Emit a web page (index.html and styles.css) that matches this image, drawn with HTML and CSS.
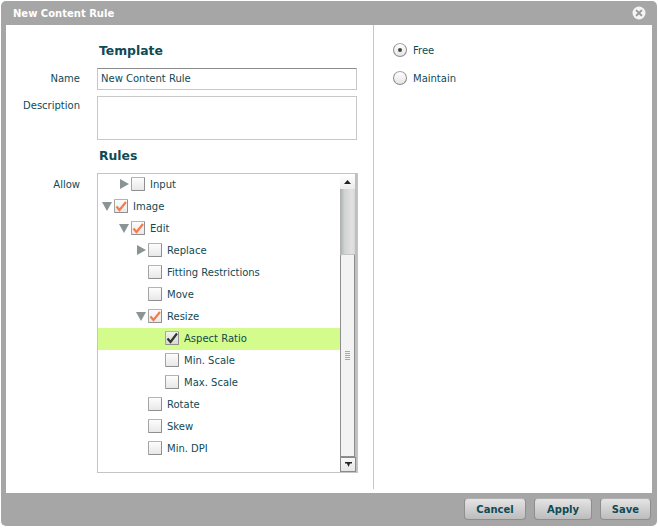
FILE: index.html
```html
<!DOCTYPE html>
<html lang="en">
<head>
<meta charset="utf-8">
<title>New Content Rule</title>
<link rel="stylesheet" href="styles.css">
</head>
<body>
<div class="window">
  <header class="titlebar">
    <span class="title">New Content Rule</span>
    <svg class="close" width="14" height="14" viewBox="0 0 14 14"><circle cx="7" cy="7" r="6.5" fill="#f4f4f4"/><path d="M4.6 4.6l4.8 4.8M9.4 4.6l-4.8 4.8" stroke="#9a9a9a" stroke-width="2" stroke-linecap="round"/></svg>
  </header>
  <main class="content">
    <section class="left">
      <div class="form">
        <h2 class="heading field">Template</h2>
        <label class="label label-name">Name</label>
        <div class="input input-name">New Content Rule</div>
        <label class="label label-desc">Description</label>
        <div class="input input-desc"></div>
        <h2 class="heading heading-rules field">Rules</h2>
        <label class="label label-allow">Allow</label>
        <div class="tree">
          <ul class="rows">
            <li class="row d1"><span class="slot"><svg width="9" height="10" viewBox="0 0 9 10"><path d="M0 0l9 5-9 5z" fill="#8a9494"/></svg></span><span class="box"></span><span class="text">Input</span></li>
            <li class="row d0"><span class="slot"><svg width="10" height="9" viewBox="0 0 10 9"><path d="M0 0h10L5 9z" fill="#8a9494"/></svg></span><span class="box"><svg class="tick" width="14" height="14" viewBox="0 0 14 14"><path d="M2.5 7.5L5.5 11 12 3" fill="none" stroke="#f57a4e" stroke-width="2.2"/></svg></span><span class="text">Image</span></li>
            <li class="row d1"><span class="slot"><svg width="10" height="9" viewBox="0 0 10 9"><path d="M0 0h10L5 9z" fill="#8a9494"/></svg></span><span class="box"><svg class="tick" width="14" height="14" viewBox="0 0 14 14"><path d="M2.5 7.5L5.5 11 12 3" fill="none" stroke="#f57a4e" stroke-width="2.2"/></svg></span><span class="text">Edit</span></li>
            <li class="row d2"><span class="slot"><svg width="9" height="10" viewBox="0 0 9 10"><path d="M0 0l9 5-9 5z" fill="#8a9494"/></svg></span><span class="box"></span><span class="text">Replace</span></li>
            <li class="row d2"><span class="slot"></span><span class="box"></span><span class="text">Fitting Restrictions</span></li>
            <li class="row d2"><span class="slot"></span><span class="box"></span><span class="text">Move</span></li>
            <li class="row d2"><span class="slot"><svg width="10" height="9" viewBox="0 0 10 9"><path d="M0 0h10L5 9z" fill="#8a9494"/></svg></span><span class="box"><svg class="tick" width="14" height="14" viewBox="0 0 14 14"><path d="M2.5 7.5L5.5 11 12 3" fill="none" stroke="#f57a4e" stroke-width="2.2"/></svg></span><span class="text">Resize</span></li>
            <li class="row d3 selected"><span class="slot"></span><span class="box box-on"><svg class="tick" width="14" height="14" viewBox="0 0 14 14"><path d="M2.5 7.5L5.5 11 12 2.5" fill="none" stroke="#333" stroke-width="2.2"/></svg></span><span class="text">Aspect Ratio</span></li>
            <li class="row d3"><span class="slot"></span><span class="box"></span><span class="text">Min. Scale</span></li>
            <li class="row d3"><span class="slot"></span><span class="box"></span><span class="text">Max. Scale</span></li>
            <li class="row d2"><span class="slot"></span><span class="box"></span><span class="text">Rotate</span></li>
            <li class="row d2"><span class="slot"></span><span class="box"></span><span class="text">Skew</span></li>
            <li class="row d2"><span class="slot"></span><span class="box"></span><span class="text">Min. DPI</span></li>
          </ul>
          <div class="scrollbar">
            <div class="sb-btn"><svg width="7" height="4" viewBox="0 0 7 4"><path d="M3.5 0L7 4H0z" fill="#222"/></svg></div>
            <div class="sb-track"></div>
            <div class="sb-thumb"><span class="grip"></span></div>
            <div class="sb-btn sb-down"><svg width="7" height="5" viewBox="0 0 7 5"><path d="M0 0h7v1.5H5L3.5 5 2 1.5H0z" fill="#222"/></svg></div>
          </div>
        </div>
      </div>
    </section>
    <section class="right">
      <div class="radio-row"><span class="radio radio-on"></span><span class="text">Free</span></div>
      <div class="radio-row"><span class="radio"></span><span class="text">Maintain</span></div>
    </section>
  </main>
  <footer class="footer">
    <button class="btn btn-cancel">Cancel</button>
    <button class="btn btn-apply">Apply</button>
    <button class="btn btn-save">Save</button>
  </footer>
</div>
</body>
</html>
```
FILE: styles.css
```css
* { box-sizing: border-box; }
html, body { margin: 0; height: 100%; background: #fff; }
body {
  padding: 1px;
  font-family: "DejaVu Sans", Verdana, sans-serif;
  font-size: 10px;
  color: #0f4a55;
}
.window {
  width: 656px;
  height: 525px;
  background: #a6a6a6;
  border-radius: 5px;
  display: flex;
  flex-direction: column;
}
.titlebar {
  height: 24px;
  flex: none;
  display: flex;
  align-items: center;
  justify-content: space-between;
  padding: 0 11px 0 12px;
}
.title { color: #fff; font-weight: bold; font-size: 10px; }
.content {
  flex: 1;
  margin: 0 5px;
  background: #fff;
  display: flex;
  padding-bottom: 4px;
}
.left { width: 368px; flex: none; border-right: 1px solid #c6c6c6; }
.right { flex: 1; padding: 11px 0 0 19px; }
.form {
  display: grid;
  grid-template-columns: 74px 261px;
  column-gap: 17px;
  padding-top: 15px;
}
.field { grid-column: 2; }
.heading {
  margin: 0;
  height: 22px;
  line-height: 22px;
  padding-left: 2px;
  font-size: 12.4px;
  font-weight: bold;
  color: #0f4a55;
}
.heading-rules { margin-top: 5px; }
.label { text-align: right; line-height: 22px; }
.label-name { margin-top: 6px; }
.label-desc { margin-top: 5px; }
.label-allow { margin-top: 7px; }
.input {
  border: 1px solid #c8c8c8;
  background: #fff;
  padding: 0 3px;
  line-height: 19px;
  width: 260px;
}
.input-name { height: 22px; margin-top: 6px; border-top-color: #8c8c8c; }
.input-desc { height: 44px; margin-top: 6px; }
.tree {
  position: relative;
  height: 300px;
  margin-top: 6px;
  border: 1px solid #c4c4c4;
  overflow: hidden;
  display: flex;
}
.rows { flex: 1; list-style: none; margin: 0; padding: 0; }
.row { height: 22px; padding-bottom: 2px; display: flex; align-items: center; }
.d0 { padding-left: 0; }
.d1 { padding-left: 17px; }
.d2 { padding-left: 34px; }
.d3 { padding-left: 51px; }
.selected { background: #d4fc8c; }
.slot {
  width: 16px;
  flex: none;
  display: flex;
  justify-content: flex-end;
  align-items: center;
  padding-right: 2px;
}
.box {
  width: 14px;
  height: 14px;
  margin-right: 5px;
  flex: none;
  border: 1px solid #8f8f8f;
  border-top-color: #b4b4b4;
  border-left-color: #a4a4a4;
  border-radius: 1px;
  background: linear-gradient(#fdfdfd, #e8e8e8);
  position: relative;
}
.box-on { background: linear-gradient(#f2f2f2, #d8dcc8); }
.tick { position: absolute; left: -1px; top: -1px; }
.scrollbar {
  width: 17px;
  flex: none;
  position: relative;
  display: flex;
  flex-direction: column;
  background: #bcc0c0;
  padding-right: 2px;
}
.sb-btn {
  height: 15px;
  flex: none;
  background: linear-gradient(#fff, #ececec);
  display: flex;
  align-items: center;
  justify-content: center;
}
.sb-down { border: 1px solid #8a8a8a; background: linear-gradient(#f8f8f8, #e6e6e6); margin-right: -1px; }
.sb-track {
  height: 65px;
  flex: none;
  background: linear-gradient(90deg, #a9adad, #d0d2d2 30%, #e2e2e2 80%, #d6d6d6);
}
.sb-thumb {
  flex: 1;
  border: 1px solid #8e8e8e;
  border-top-color: #c4c4c4;
  border-radius: 2px 2px 0 0;
  background: #f3f3f3;
  display: flex;
  align-items: center;
  justify-content: center;
}
.grip {
  width: 5px;
  height: 10px;
  background: repeating-linear-gradient(#a8a8a8 0 1px, transparent 1px 2px);
}
.radio-row { height: 28px; display: flex; align-items: center; }
.radio {
  width: 14px;
  height: 14px;
  margin-right: 6px;
  border-radius: 50%;
  border: 1px solid #8c8c8c;
  border-top-color: #a8a8a8;
  background: linear-gradient(#fff, #e4e4e4);
  display: flex;
  align-items: center;
  justify-content: center;
}
.radio-on::after {
  content: "";
  width: 4px;
  height: 4px;
  border-radius: 50%;
  background: #444;
}
.footer {
  height: 33px;
  flex: none;
  display: flex;
  justify-content: flex-end;
  gap: 8px;
  padding: 5px 6px 0 0;
}
.btn {
  height: 22px;
  padding: 0;
  font: bold 10px "DejaVu Sans", Verdana, sans-serif;
  color: #0f4a55;
  border: 1px solid #8e8e8e;
  border-top-color: #b0b0b0;
  border-radius: 4px;
  background: linear-gradient(#e4e4e4, #bcbcbc);
}
.btn-cancel { width: 62px; }
.btn-apply { width: 58px; }
.btn-save { width: 51px; }
```
